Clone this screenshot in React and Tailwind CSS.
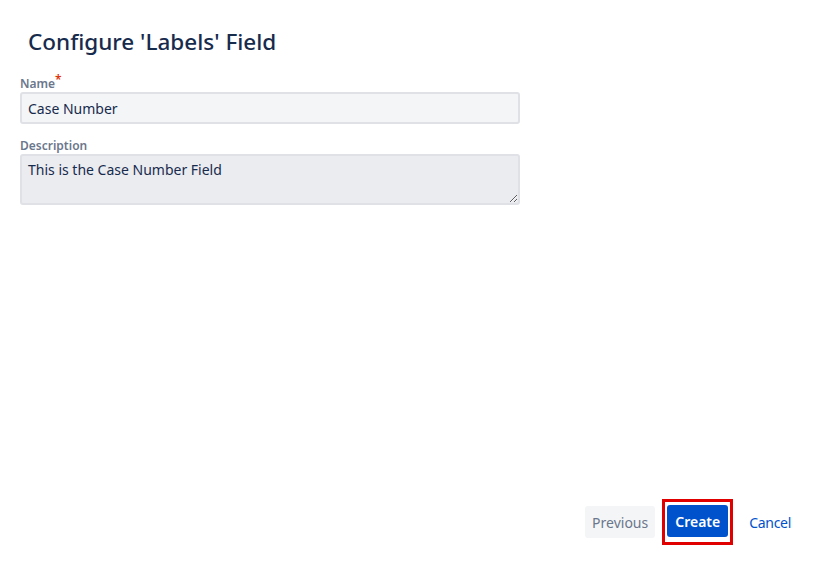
// Configure field dialog: name + description, with footer actions.
export default function App() {
  return (
    <div
      className="relative flex h-[564px] w-[836px] flex-col bg-white text-[#172b4d]"
      style={{ fontFamily: "'Noto Sans', 'Open Sans', sans-serif" }}
    >
      <h1 className="ml-[28px] mt-[26px] text-[22.5px] font-medium leading-[32px] text-[#172b4d]">
        Configure 'Labels' Field
      </h1>

      <form className="ml-[20px] mt-[18px] w-[500px]">
        <label className="block text-[12px] font-semibold leading-[16px] text-[#6b778c]">
          Name<span className="relative -top-[4px] text-[#de350b]">*</span>
        </label>
        <input
          className="block h-[32px] w-full rounded-[3px] border-2 border-[#dfe1e6] bg-[#f4f5f7] px-[6px] text-[14px] text-[#172b4d] outline-none"
          defaultValue="Case Number"
        />

        <label className="mt-[14px] block text-[12px] font-semibold leading-[16px] text-[#6b778c]">
          Description
        </label>
        <textarea
          className="block h-[51px] w-full rounded-[3px] border-2 border-[#dfe1e6] bg-[#ebecf0] px-[6px] pt-[4px] text-[14px] leading-[20px] text-[#172b4d] outline-none"
          defaultValue="This is the Case Number Field"
        />
      </form>

      <div className="mt-auto mb-[19px] flex items-center justify-end pr-[35px]">
        <button className="h-[32px] rounded-[3px] bg-[#f4f5f7] px-[7px] text-[14px] text-[#6b778c]">
          Previous
        </button>
        <div className="ml-[7px] border-[3px] border-[#e00000] px-[2px] pt-[3px] pb-[5px]">
          <button className="block h-[32px] rounded-[3px] bg-[#0052cc] px-[8px] text-[14px] font-semibold text-white">
            Create
          </button>
        </div>
        <button className="ml-[6px] h-[32px] px-[10px] text-[14px] tracking-[-0.3px] text-[#0052cc]">Cancel</button>
      </div>
    </div>
  );
}
